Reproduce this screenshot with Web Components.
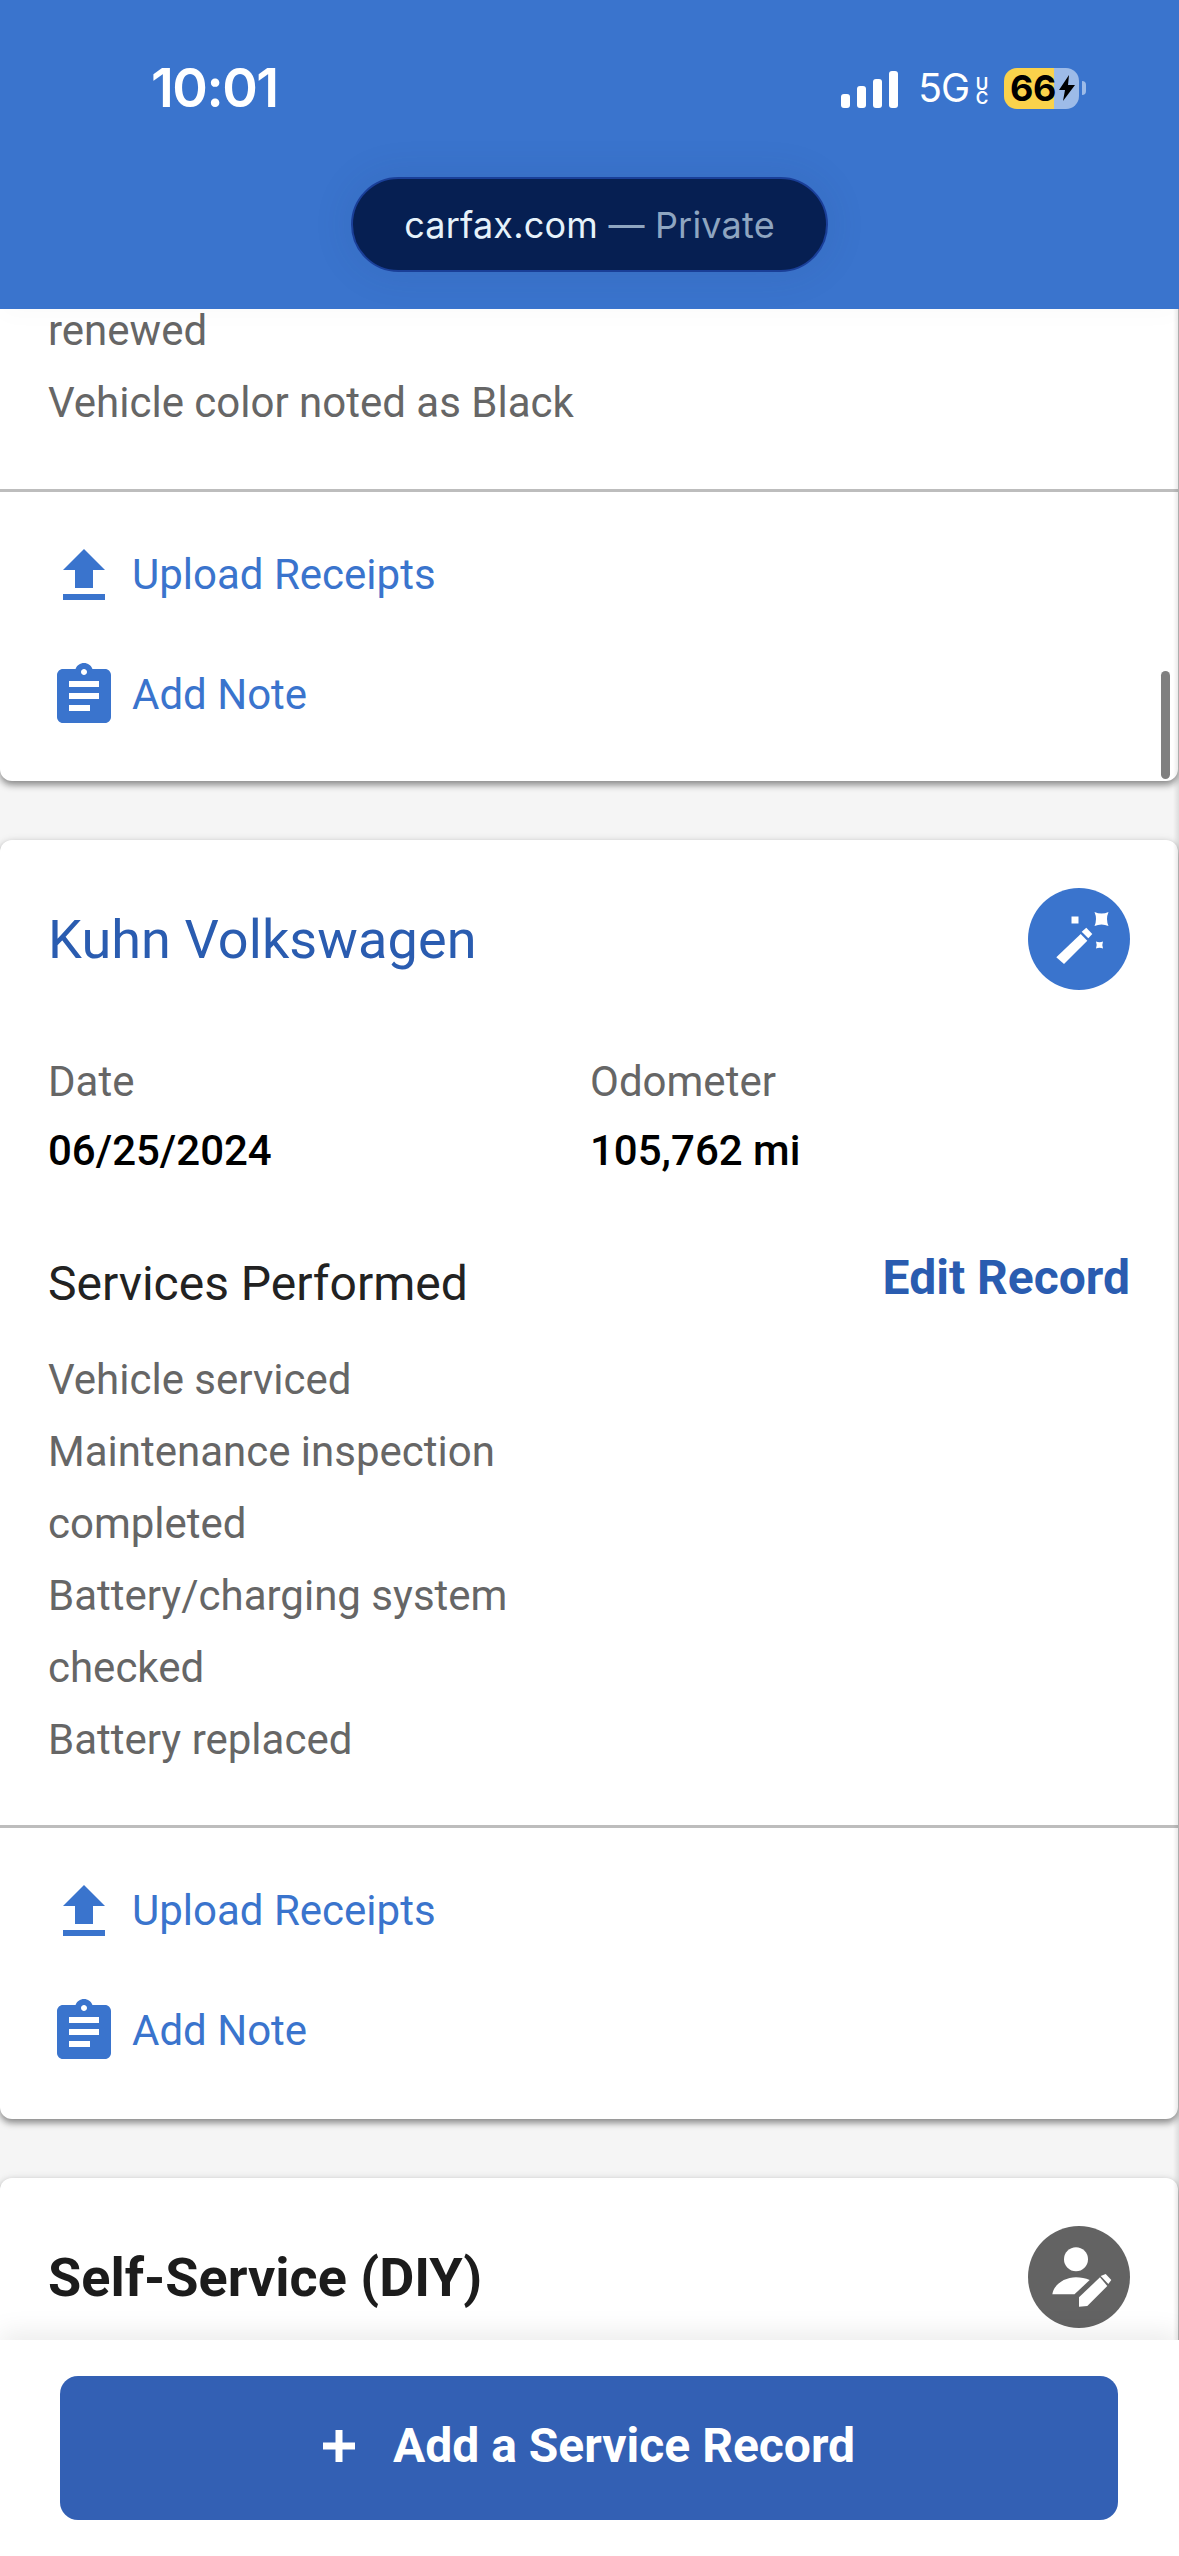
<!DOCTYPE html>
<html lang="en">
<head>
<meta charset="utf-8">
<title>Service history</title>
<style>
  html, body { margin: 0; height: 100%; background: #f5f5f5; }
  body { font-family: Roboto, "Liberation Sans", sans-serif; overflow: hidden; }
</style>
</head>
<body>
<app-shell>
  <status-header slot="top"></status-header>

  <service-card class="partial">
    <ul-lines wide>
      <span>renewed</span>
      <span>Vehicle color noted as Black</span>
    </ul-lines>
  </service-card>

  <service-card>
    <card-title slot="head" tone="blue">Kuhn Volkswagen</card-title>
    <round-badge slot="head" icon="wand"></round-badge>
    <record-facts slot="facts" date="06/25/2024" odometer="105,762 mi"></record-facts>
    <services-head slot="facts"></services-head>
    <ul-lines>
      <span>Vehicle serviced</span>
      <span>Maintenance inspection completed</span>
      <span>Battery/charging system checked</span>
      <span>Battery replaced</span>
    </ul-lines>
  </service-card>

  <service-card class="cut">
    <card-title slot="head">Self-Service (DIY)</card-title>
    <round-badge slot="head" icon="person" tone="grey"></round-badge>
  </service-card>

  <add-record-bar slot="bottom"></add-record-bar>
</app-shell>

<script>
const ICONS = {
  upload: '<path d="M9 16h6v-6h4l-7-7-7 7h4zm-4 2h14v2H5z"/>',
  note: '<path d="M19 3h-4.18C14.4 1.84 13.3 1 12 1c-1.3 0-2.4.84-2.82 2H5c-1.1 0-2 .9-2 2v14c0 1.1.9 2 2 2h14c1.1 0 2-.9 2-2V5c0-1.1-.9-2-2-2zm-7 0c.55 0 1 .45 1 1s-.45 1-1 1-1-.45-1-1 .45-1 1-1zm2 14H7v-2h7v2zm3-4H7v-2h10v2zm0-4H7V7h10v2z"/>'
};

const BADGES = {
  // drawn in the 102px box of the circle
  wand: `
    <path d="M28.3 69.3 52.7 46 59.3 52.7 36 76z"/>
    <path d="M53.7 43.7 58.3 39.7 64.3 46 60.3 50.3z"/>
    <path d="M66.5 24Q73.5 27 80.5 24 77.5 31 80.5 38 73.5 35 66.5 38 69.5 31 66.5 24z"/>
    <path d="M43.5 28.500h7v7h-7z"/>
    <path d="M68 53.500q3.500 1.400 7 0-1.400 3.500 0 7-3.500-1.400-7 0 1.400-3.500 0-7z"/>`,
  person: `
    <circle cx="48" cy="33.3" r="12"/>
    <path d="M24.3 68.3C26 58 37 51.3 48 51.3c4.800 0 9.500.9 13.700 2.700L46.500 68.300z"/>
    <path d="M51 71.300 72 51.300 79.300 60 59.300 80 51 80.700z"/>
    <path d="M72.700 50 77.700 48 83.300 54 80.300 58z"/>`
};

class AppShell extends HTMLElement {
  constructor() {
    super();
    this.attachShadow({ mode: "open" }).innerHTML = `
      <style>
        :host { display: flex; flex-direction: column; height: 2556px; width: 1179px; }
        .scroller { flex: 1; min-height: 0; overflow: hidden; position: relative; background: #f5f5f5; }
        .track { display: flex; flex-direction: column; gap: 59px; margin-top: -14px; }
        .thumb { position: absolute; left: 1161px; top: 362px; width: 9px; height: 108px; border-radius: 5px; background: #808080; }
        .edge { position: absolute; top: 0; bottom: 0; right: 0; width: 6px; background: linear-gradient(to right, rgba(0,0,0,0), rgba(0,0,0,.1)); }
      </style>
      <slot name="top"></slot>
      <div class="scroller">
        <div class="track"><slot></slot></div>
        <div class="thumb"></div>
        <div class="edge"></div>
      </div>
      <slot name="bottom"></slot>`;
  }
}

class StatusHeader extends HTMLElement {
  constructor() {
    super();
    this.attachShadow({ mode: "open" }).innerHTML = `
      <style>
        :host { display: block; height: 309px; box-sizing: border-box; background: #3a74cd; color: #fff; font-family: Inter, "Liberation Sans", sans-serif; position: relative; z-index: 2; box-shadow: 0 6px 24px rgba(0,0,0,.02); }
        .status { height: 56px; padding: 60px 93px 0 151px; display: flex; justify-content: space-between; align-items: center; }
        .time { font-size: 54px; font-weight: 600; letter-spacing: -1.5px; line-height: 56px; }
        .right { display: flex; align-items: center; }
        .bars { width: 57px; height: 37px; display: flex; gap: 7px; align-items: flex-end; margin-right: 20px; margin-top: 2px; }
        .bars i { width: 9px; background: #fff; border-radius: 3px; flex: none; }
        .net { font-size: 39px; font-weight: 400; letter-spacing: -1px; line-height: 40px; }
        .uc { writing-mode: vertical-rl; text-orientation: upright; font-size: 17px; font-weight: 600; line-height: 17px; letter-spacing: -6px; margin: 0 14px 0 4px; }
        .batt { width: 75px; height: 41px; border-radius: 13px; background: linear-gradient(90deg, #fad24b 0 50px, #9dbbe8 50px); color: #000; display: flex; align-items: center; font-size: 36px; font-weight: 700; letter-spacing: -.5px; padding-left: 6px; box-sizing: border-box; }
        .batt svg { margin-left: 2px; flex: none; }
        .nub { width: 4px; height: 14px; border-radius: 0 4px 4px 0; background: #9dbbe8; margin-left: 3px; }
        .pill { width: 477px; height: 95px; box-sizing: border-box; margin: 61px auto 0; border-radius: 48px; background: #061f52; border: 2px solid #1a3f98; display: flex; justify-content: center; align-items: center; font-size: 36px; letter-spacing: .2px; color: #e6f2fa; box-shadow: 0 0 40px rgba(40,60,110,.12); }
        .pill span { color: #8ea5c0; }
      </style>
      <div class="status">
        <div class="time">10:01</div>
        <div class="right">
          <div class="bars">
            <i style="height:14px"></i><i style="height:22px"></i><i style="height:29px"></i><i style="height:37px"></i>
          </div>
          <div class="net">5G</div>
          <div class="uc">UC</div>
          <div class="batt">66<svg width="18" height="26" viewBox="0 0 18 26"><path d="M11 0 1 15h6L5 26 17 10h-7z" fill="#000"/></svg></div>
          <div class="nub"></div>
        </div>
      </div>
      <div class="pill">carfax.com&nbsp;<span>— Private</span></div>`;
  }
}

class ServiceCard extends HTMLElement {
  constructor() {
    super();
    const cut = this.classList.contains("cut");
    const actions = cut ? "" : `
      <div class="actions">
        <action-row icon="upload">Upload Receipts</action-row>
        <action-row icon="note">Add Note</action-row>
      </div>`;
    this.attachShadow({ mode: "open" }).innerHTML = `
      <style>
        :host { display: block; width: 1178px; background: #fff; border-radius: 12px; box-shadow: 0 4px 7px rgba(0,0,0,.42), 0 0 10px rgba(0,0,0,.07); }
        .head { display: flex; justify-content: space-between; align-items: center; padding: 48px 48px 0; }
        .facts { padding: 0 48px; }
        .body { padding: 0 48px 49px; }
        .actions { border-top: 3px solid #bdbdbd; padding: 24px 0 27px; }
        :host(.partial) { border-radius: 0 0 12px 12px; }
        :host(.partial) .head, :host(.partial) .facts { display: none; }
        :host(.partial) .body { padding-bottom: 50px; }
        :host(.partial) .actions { padding-bottom: 25px; }
        :host(.cut) { height: 240px; }
        :host(.cut) .body, :host(.cut) .facts { display: none; }
      </style>
      <div class="head"><slot name="head"></slot></div>
      <div class="facts"><slot name="facts"></slot></div>
      <div class="body"><slot></slot></div>
      ${actions}`;
  }
}

class CardTitle extends HTMLElement {
  constructor() {
    super();
    this.attachShadow({ mode: "open" }).innerHTML = `
      <style>
        :host { display: block; font-size: 54px; line-height: 64px; padding-top: 2px; font-weight: 700; color: #1c1c1c; }
        :host([tone="blue"]) { font-weight: 400; color: #2a5cb0; letter-spacing: .1px; }
      </style>
      <slot></slot>`;
  }
}

class RoundBadge extends HTMLElement {
  constructor() {
    super();
    const art = BADGES[this.getAttribute("icon")];
    this.attachShadow({ mode: "open" }).innerHTML = `
      <style>
        :host { display: block; width: 102px; height: 102px; border-radius: 50%; background: #3a74cd; flex: none; }
        :host([tone="grey"]) { background: #636363; }
        svg { display: block; }
      </style>
      <svg width="102" height="102" viewBox="0 0 102 102" fill="#fff">${art}</svg>`;
  }
}

class RecordFacts extends HTMLElement {
  constructor() {
    super();
    this.attachShadow({ mode: "open" }).innerHTML = `
      <style>
        :host { display: grid; grid-template-columns: 542px 1fr; margin-top: 57px; font-size: 42px; line-height: 69px; color: #666; }
        b { display: block; font-weight: 500; color: #000; }
      </style>
      <div>Date<b>${this.getAttribute("date")}</b></div>
      <div>Odometer<b>${this.getAttribute("odometer")}</b></div>`;
  }
}

class ServicesHead extends HTMLElement {
  constructor() {
    super();
    this.attachShadow({ mode: "open" }).innerHTML = `
      <style>
        :host { display: flex; justify-content: space-between; align-items: center; margin-top: 61px; height: 72px; }
        .t { font-size: 48px; color: #222; position: relative; top: 1px; }
        .e { font-size: 48px; font-weight: 700; color: #2a5cb0; position: relative; top: -5px; }
      </style>
      <div class="t">Services Performed</div>
      <div class="e">Edit Record</div>`;
  }
}

class UlLines extends HTMLElement {
  constructor() {
    super();
    this.attachShadow({ mode: "open" }).innerHTML = `
      <style>
        :host { display: flex; flex-direction: column; width: 520px; font-size: 42px; line-height: 72px; color: #666; padding-top: 26px; }
        :host([wide]) { width: auto; padding-top: 0; }
        ::slotted(span) { display: block; }
      </style>
      <slot></slot>`;
  }
}

class ActionRow extends HTMLElement {
  constructor() {
    super();
    const icon = ICONS[this.getAttribute("icon")];
    this.attachShadow({ mode: "open" }).innerHTML = `
      <style>
        :host { display: flex; align-items: center; gap: 12px; height: 120px; padding-left: 48px; font-size: 42px; color: #3a74cd; }
        .t { padding-bottom: 4px; }
      </style>
      <svg width="72" height="72" viewBox="0 0 24 24" fill="#3a74cd">${icon}</svg>
      <span class="t"><slot></slot></span>`;
  }
}

class AddRecordBar extends HTMLElement {
  constructor() {
    super();
    this.attachShadow({ mode: "open" }).innerHTML = `
      <style>
        :host { display: block; height: 216px; box-sizing: border-box; padding: 36px 61px 0 60px; background: #fff; position: relative; box-shadow: 0 -8px 24px rgba(0,0,0,.08); }
        .btn { height: 144px; box-sizing: border-box; padding-bottom: 5px; border-radius: 18px; background: #3360b4; color: #fff; display: flex; justify-content: center; align-items: center; gap: 38px; font-size: 48px; font-weight: 700; }
      </style>
      <div class="btn">
        <svg width="32" height="32" viewBox="0 0 32 32" fill="#fff"><path d="M12.500 0h7v12.500H32v7H19.500V32h-7V19.500H0v-7h12.500z"/></svg>
        <span>Add a Service Record</span>
      </div>`;
  }
}

customElements.define("app-shell", AppShell);
customElements.define("status-header", StatusHeader);
customElements.define("service-card", ServiceCard);
customElements.define("card-title", CardTitle);
customElements.define("round-badge", RoundBadge);
customElements.define("record-facts", RecordFacts);
customElements.define("services-head", ServicesHead);
customElements.define("ul-lines", UlLines);
customElements.define("action-row", ActionRow);
customElements.define("add-record-bar", AddRecordBar);
</script>
</body>
</html>
